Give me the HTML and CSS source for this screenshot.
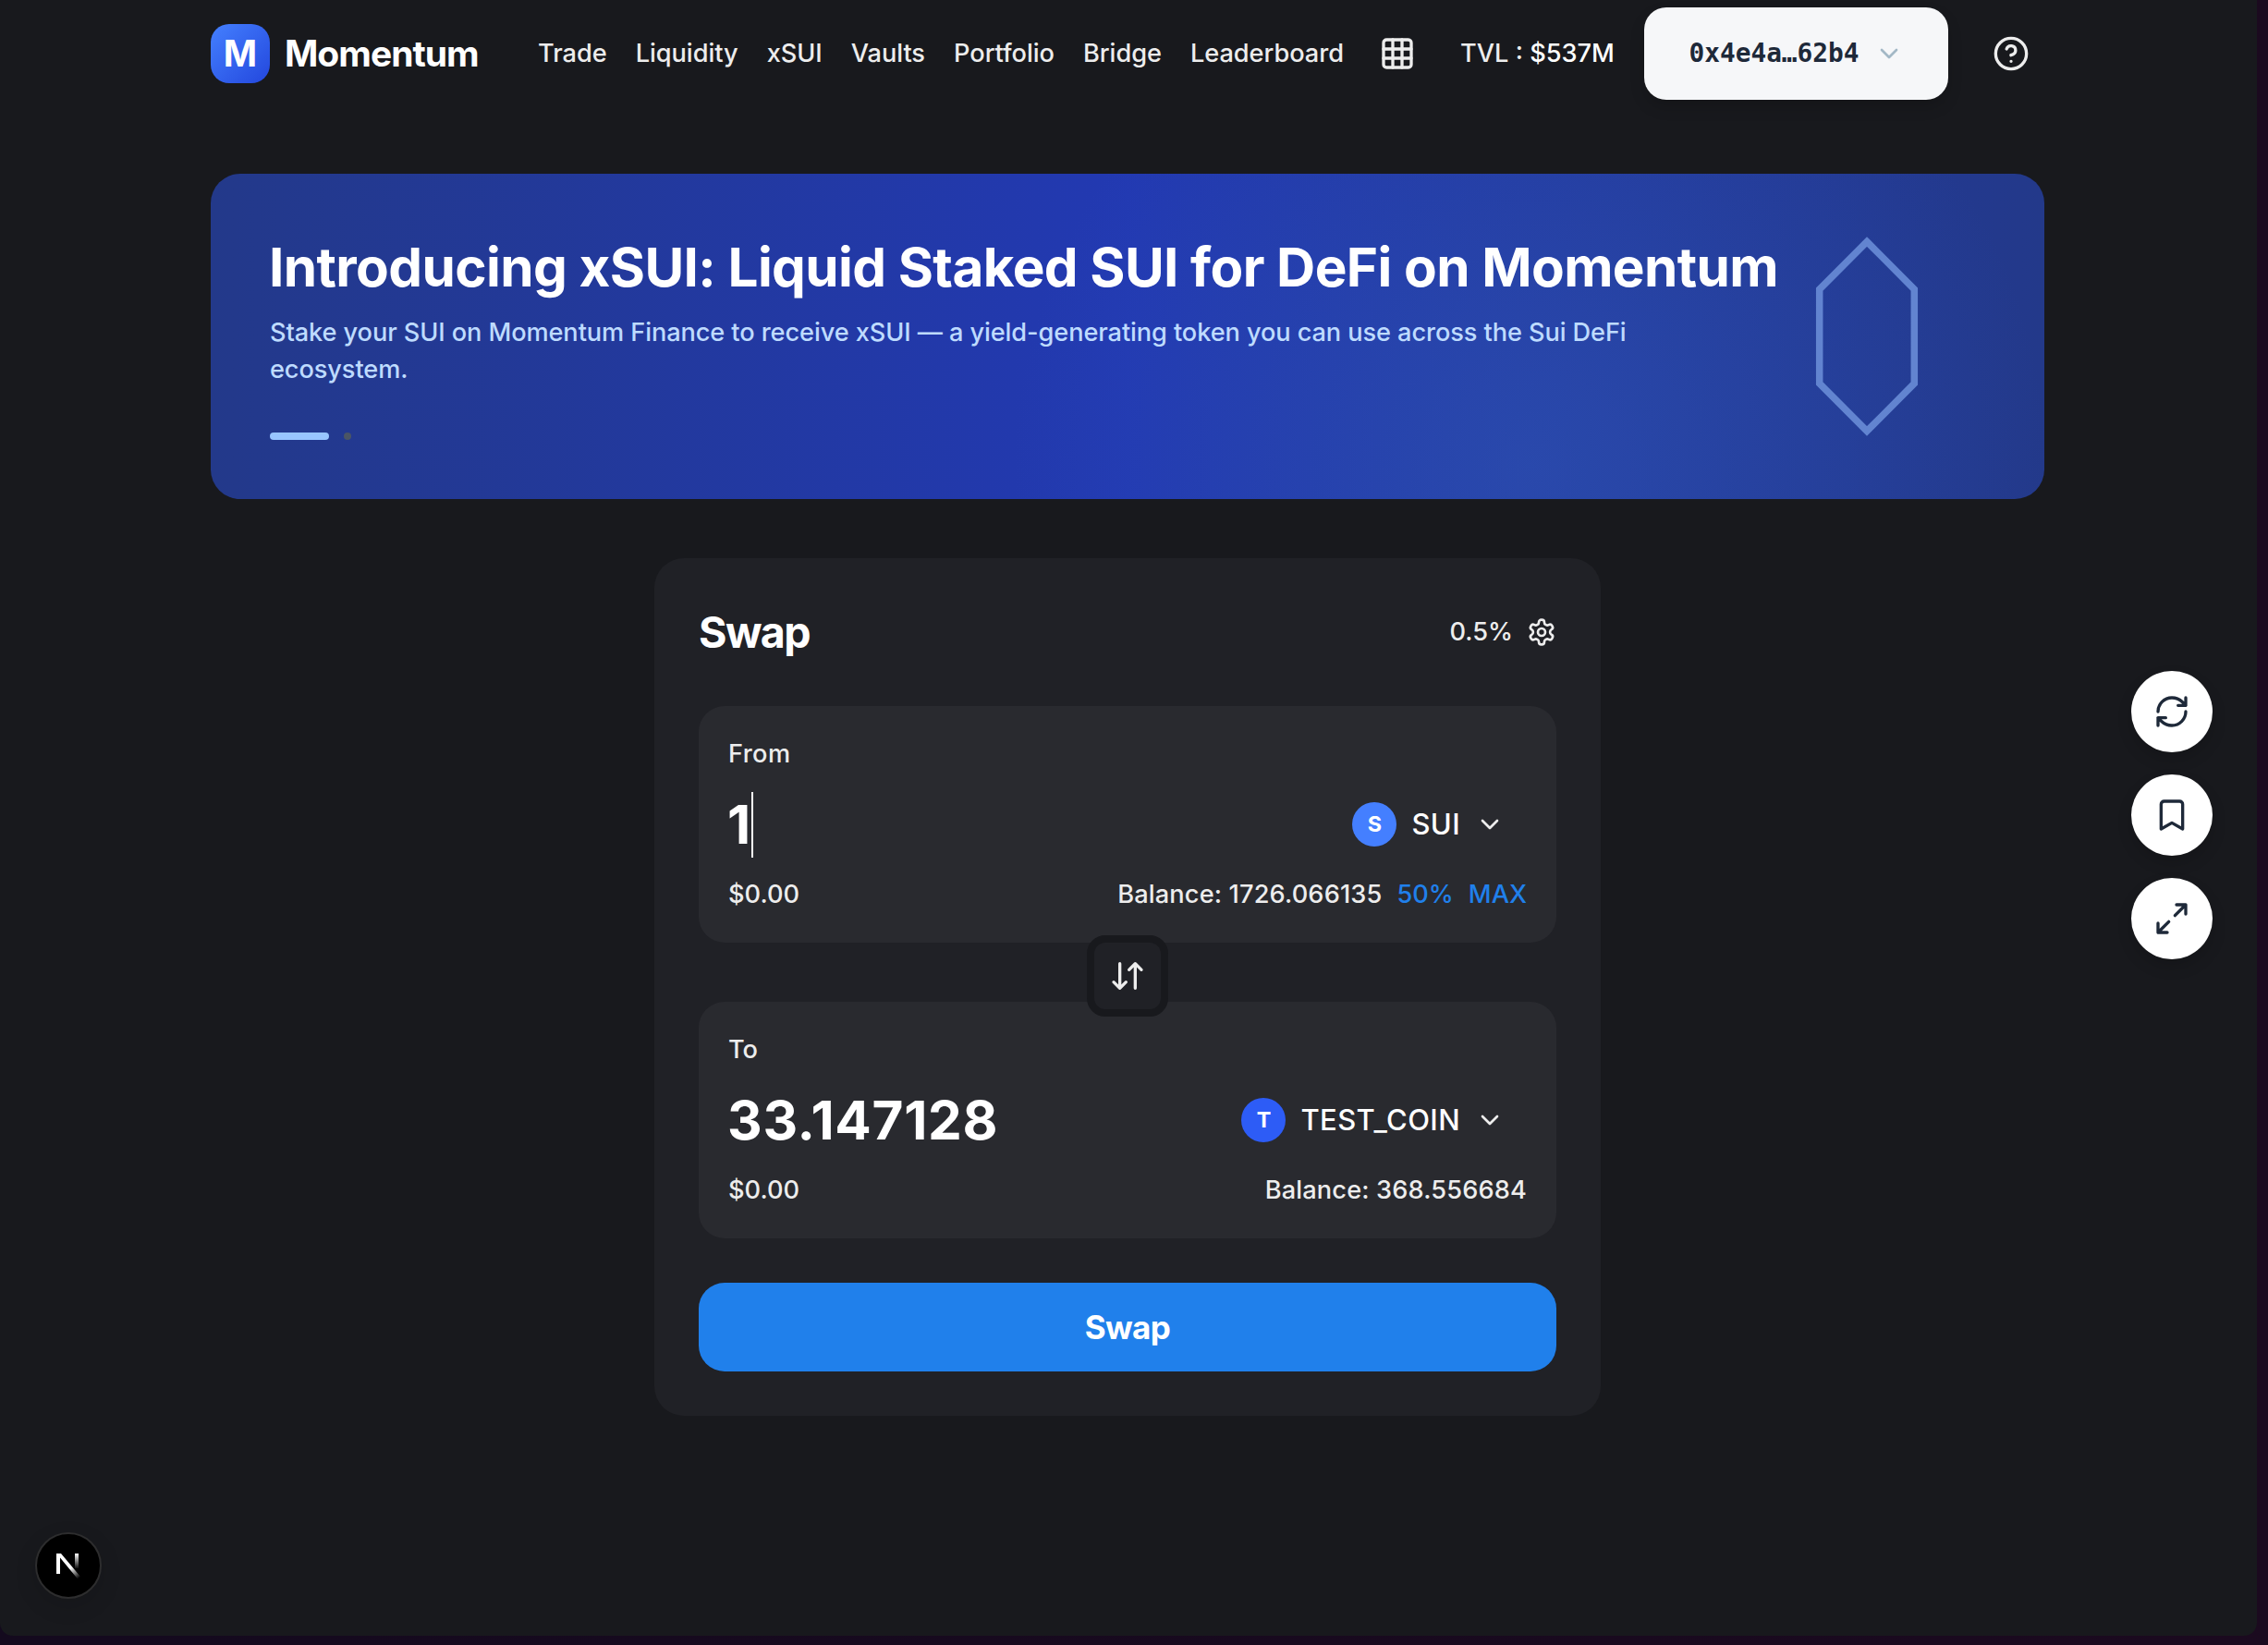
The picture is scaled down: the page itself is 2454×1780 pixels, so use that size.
FILE: index.html
```html
<!DOCTYPE html>
<html lang="en">
<head>
<meta charset="utf-8">
<title>Momentum</title>
<link rel="stylesheet" href="styles.css">
</head>
<body>
<div class="page">
  <header class="header">
    <div class="logo">M</div>
    <div class="brand">Momentum</div>
    <nav class="nav">
      <a>Trade</a><a>Liquidity</a><a>xSUI</a><a>Vaults</a><a>Portfolio</a><a>Bridge</a><a>Leaderboard</a>
    </nav>
    <svg class="icon apps" viewBox="0 0 24 24"><rect x="3" y="3" width="18" height="18" rx="2"/><path d="M3 9h18M3 15h18M9 3v18M15 3v18"/></svg>
    <div class="tvl">TVL : <span class="tvl-value">$537M</span></div>
    <button class="wallet">0x4e4a…62b4
      <svg class="chevron" viewBox="0 0 24 24"><path d="m6 9 6 6 6-6"/></svg>
    </button>
    <svg class="icon help" viewBox="0 0 24 24"><circle cx="12" cy="12" r="10"/><path d="M9.09 9a3 3 0 0 1 5.83 1c0 2-3 3-3 3M12 17h.01"/></svg>
  </header>

  <main class="main">
    <section class="banner">
      <div class="banner-copy">
        <h1 class="banner-title">Introducing xSUI: Liquid Staked SUI for DeFi on Momentum</h1>
        <p class="banner-text">Stake your SUI on Momentum Finance to receive xSUI — a yield-generating token you can use across the Sui DeFi<br>ecosystem.</p>
        <div class="pager"><span class="bar"></span><span class="dot"></span></div>
      </div>
      <svg class="gem" viewBox="0 0 112 220"><path d="M56 7.5 107.3 59v102L56 212.500 4.700 161V59Z"/></svg>
    </section>

    <section class="card">
      <div class="card-head">
        <h2 class="card-title">Swap</h2>
        <div class="slippage">0.5%
          <svg class="gear" viewBox="0 0 24 24"><path d="M12.22 2h-.44a2 2 0 0 0-2 2v.18a2 2 0 0 1-1 1.73l-.43.25a2 2 0 0 1-2 0l-.15-.08a2 2 0 0 0-2.73.73l-.22.38a2 2 0 0 0 .73 2.73l.15.1a2 2 0 0 1 1 1.72v.51a2 2 0 0 1-1 1.74l-.15.09a2 2 0 0 0-.73 2.73l.22.38a2 2 0 0 0 2.73.73l.15-.08a2 2 0 0 1 2 0l.43.25a2 2 0 0 1 1 1.73V20a2 2 0 0 0 2 2h.44a2 2 0 0 0 2-2v-.18a2 2 0 0 1 1-1.73l.43-.25a2 2 0 0 1 2 0l.15.08a2 2 0 0 0 2.73-.73l.22-.39a2 2 0 0 0-.73-2.73l-.15-.08a2 2 0 0 1-1-1.74v-.5a2 2 0 0 1 1-1.74l.15-.09a2 2 0 0 0 .73-2.73l-.22-.38a2 2 0 0 0-2.73-.73l-.15.08a2 2 0 0 1-2 0l-.43-.25a2 2 0 0 1-1-1.73V4a2 2 0 0 0-2-2z"/><circle cx="12" cy="12" r="3"/></svg>
        </div>
      </div>

      <div class="panels">
        <div class="panel">
          <div class="label from">From</div>
          <div class="row">
            <div class="amount">1<span class="caret"></span></div>
            <div class="token"><span class="coin sui">S</span><span class="symbol short">SUI</span><svg class="chevron" viewBox="0 0 24 24"><path d="m6 9 6 6 6-6"/></svg></div>
          </div>
          <div class="row foot">
            <span>$0.00</span>
            <div class="balance"><span class="balance-value">Balance: 1726.066135</span><a class="half">50%</a><a class="max">MAX</a></div>
          </div>
        </div>
        <button class="flip"><svg class="icon" viewBox="0 0 24 24"><path d="m3 16 4 4 4-4M7 20V4M21 8l-4-4-4 4M17 4v16"/></svg></button>
        <div class="panel">
          <div class="label">To</div>
          <div class="row">
            <div class="amount">33.147128</div>
            <div class="token"><span class="coin test">T</span><span class="symbol">TEST_COIN</span><svg class="chevron" viewBox="0 0 24 24"><path d="m6 9 6 6 6-6"/></svg></div>
          </div>
          <div class="row foot">
            <span>$0.00</span>
            <div class="balance"><span class="balance-value">Balance: 368.556684</span></div>
          </div>
        </div>
      </div>

      <button class="submit">Swap</button>
    </section>
  </main>

  <div class="tools">
    <button class="tool"><svg class="icon" viewBox="0 0 24 24"><path d="M3 12a9 9 0 0 1 9-9 9.750 9.750 0 0 1 6.740 2.740L21 8M21 3v5h-5M21 12a9 9 0 0 1-9 9 9.750 9.750 0 0 1-6.740-2.740L3 16M8 16H3v5"/></svg></button>
    <button class="tool"><svg class="icon" viewBox="0 0 24 24"><path d="m19 21-7-4-7 4V5a2 2 0 0 1 2-2h10a2 2 0 0 1 2 2z"/></svg></button>
    <button class="tool"><svg class="icon" viewBox="0 0 24 24"><path d="M15 3h6v6M21 3l-7 7M3 21l7-7M9 21H3v-6"/></svg></button>
  </div>

  <div class="dev-badge">
    <svg class="dev-mark" viewBox="0 0 28 30">
      <defs>
        <linearGradient id="diag" gradientUnits="userSpaceOnUse" x1="16" y1="18" x2="25" y2="29"><stop offset="0" stop-color="#fff"/><stop offset="1" stop-color="#fff" stop-opacity="0"/></linearGradient>
        <linearGradient id="stem" gradientUnits="userSpaceOnUse" x1="0" y1="2" x2="0" y2="19"><stop offset="0" stop-color="#fff"/><stop offset="1" stop-color="#fff" stop-opacity="0"/></linearGradient>
      </defs>
      <path d="M1 2h5L27 27l-3 2.500L5 6.500V24H1Z" fill="url(#diag)"/>
      <path d="M21 2h4v16h-4Z" fill="url(#stem)"/>
    </svg>
  </div>
</div>
</body>
</html>
```
FILE: styles.css
```css
* { box-sizing: border-box; }

body {
  margin: 0;
  height: 1780px;
  overflow: hidden;
  background: linear-gradient(90deg, #140a1e, #1b0a1f);
  color: #ededed;
  font: 450 27.2px/40px Inter, "Liberation Sans", sans-serif;
}

h1, h2, p { margin: 0; }

button {
  border: 0;
  padding: 0;
  font: inherit;
  color: inherit;
}

svg {
  display: block;
  flex: none;
  fill: none;
  stroke: currentColor;
  stroke-width: 2;
  stroke-linecap: round;
  stroke-linejoin: round;
}

.icon { width: 40px; height: 40px; }
.chevron { width: 32px; height: 32px; }

.page {
  position: relative;
  width: 2442px;
  height: 1770px;
  background: #18191d;
  border-radius: 0 0 14px 14px;
}

/* Header */
.header {
  display: flex;
  align-items: center;
  width: 1984px;
  height: 116px;
  margin-left: 228px;
  white-space: nowrap;
}

.logo {
  display: flex;
  align-items: center;
  justify-content: center;
  width: 64px;
  height: 64px;
  border-radius: 20px;
  background: linear-gradient(135deg, #4480ff, #2347dd);
  color: #fff;
  font-size: 39px;
  font-weight: 700;
}

.brand {
  width: 210px;
  margin-left: 16px;
  color: #fff;
  font-size: 39px;
  font-weight: 700;
  letter-spacing: -0.98px;
}

.nav {
  display: flex;
  justify-content: space-between;
  width: 872px;
  margin-left: 64px;
  letter-spacing: -0.050px;
}

.apps { margin-left: 38px; }

.tvl {
  width: 168px;
  margin-left: 48px;
  letter-spacing: 0;
}

.tvl-value { color: #fff; }

.wallet {
  display: flex;
  align-items: center;
  justify-content: center;
  gap: 16px;
  width: 329px;
  height: 100px;
  margin-left: 31px;
  border-radius: 24px;
  background: #f6f7f9;
  box-shadow: 0 8px 16px rgba(0, 0, 0, 0.15);
  color: #1e2939;
  font: 700 27.800px/40px "DejaVu Sans Mono", monospace;
}

.wallet .chevron { color: #a3b8c6; }

.help { margin-left: 48px; }

/* Banner */
.main {
  width: 1984px;
  margin: 72px 0 0 228px;
}

.banner {
  display: flex;
  justify-content: space-between;
  height: 352px;
  padding: 64px 136px 64px 64px;
  border-radius: 32px;
  background:
    radial-gradient(circle 560px at 72% 90%, rgba(50, 92, 186, 0.45), transparent),
    linear-gradient(90deg, #23398a, #2239b2 50%, #23398a);
}

.banner-title {
  height: 73px;
  margin-left: -1px;
  color: #fff;
  font-size: 58.4px;
  font-weight: 700;
  line-height: 73px;
  letter-spacing: -0.6px;
  white-space: nowrap;
}

.banner-text {
  margin-top: 15px;
  color: #bedbff;
  letter-spacing: -0.100px;
  white-space: nowrap;
}

.pager {
  display: flex;
  gap: 16px;
  margin-top: 48px;
}

.bar {
  width: 64px;
  height: 8px;
  border-radius: 4px;
  background: #98c5ff;
}

.dot {
  width: 8px;
  height: 8px;
  border-radius: 4px;
  background: #4a5565;
}

.gem {
  width: 112px;
  height: 220px;
  margin-top: 2px;
  stroke: #6284d0;
  stroke-width: 7.500;
  stroke-linejoin: miter;
}

/* Swap card */
.card {
  width: 1024px;
  margin: 64px 0 0 480px;
  padding: 48px;
  border-radius: 32px;
  background: #202126;
}

.card-head {
  display: flex;
  align-items: center;
  justify-content: space-between;
  height: 64px;
  margin-bottom: 48px;
}

.card-title {
  color: #fff;
  font-size: 46.6px;
  font-weight: 700;
  letter-spacing: -1.6px;
}

.slippage {
  display: flex;
  align-items: center;
  gap: 15px;
}

.gear { width: 32px; height: 32px; }

.panels {
  position: relative;
  display: flex;
  flex-direction: column;
  gap: 64px;
}

.panel {
  display: flex;
  flex-direction: column;
  gap: 20px;
  height: 256px;
  padding: 32px;
  border-radius: 28px;
  background: #292a2f;
}

.row {
  display: flex;
  align-items: center;
  justify-content: space-between;
  height: 72px;
}

.row.foot { height: 40px; }

.from { letter-spacing: 0.4px; }

.amount {
  display: flex;
  align-items: center;
  margin-left: -1px;
  color: #fff;
  font-size: 58.4px;
  font-weight: 700;
  letter-spacing: 0.7px;
}

.caret {
  width: 2px;
  height: 71px;
  background: #fff;
}

.token {
  display: flex;
  align-items: center;
  gap: 16px;
  padding-right: 24px;
}

.coin {
  display: flex;
  align-items: center;
  justify-content: center;
  width: 48px;
  height: 48px;
  border-radius: 50%;
  color: #fff;
  font-size: 23.400px;
  font-weight: 700;
}

.sui { background: #447fff; }
.test { background: #2d5cf6; }

.symbol {
  color: #fff;
  font-size: 31px;
  font-weight: 500;
  letter-spacing: 0.4px;
}

.balance {
  display: flex;
  gap: 16px;
}

.balance-value { letter-spacing: 0.15px; }

.half, .max {
  color: #2080eb;
  font-weight: 500;
  letter-spacing: 0;
}

/* Floats over the seam between the two panels */
.flip {
  position: absolute;
  top: 248px;
  left: 420px;
  display: flex;
  align-items: center;
  justify-content: center;
  width: 88px;
  height: 88px;
  border: 8px solid #18191d;
  border-radius: 20px;
  background: #202126;
}

.submit {
  display: block;
  width: 100%;
  height: 96px;
  margin-top: 48px;
  border-radius: 28px;
  background: #2080eb;
  color: #fff;
  font-size: 35px;
  font-weight: 700;
  letter-spacing: -0.6px;
}

/* Floating tools and dev indicator */
.tools {
  position: absolute;
  top: 726px;
  right: 48px;
  display: flex;
  flex-direction: column;
  gap: 24px;
}

.tool {
  display: flex;
  align-items: center;
  justify-content: center;
  width: 88px;
  height: 88px;
  border-radius: 50%;
  background: #fff;
  box-shadow: 0 8px 16px rgba(0, 0, 0, 0.15);
  color: #1e2939;
}

.dev-badge {
  position: absolute;
  left: 38px;
  top: 1658px;
  display: flex;
  align-items: center;
  justify-content: center;
  width: 72px;
  height: 72px;
  border: 2px solid #2d2d2e;
  border-radius: 50%;
  background: #000;
  box-shadow: 0 8px 24px rgba(0, 0, 0, 0.12);
}

.dev-mark {
  width: 28px;
  height: 30px;
  stroke: none;
}
```
